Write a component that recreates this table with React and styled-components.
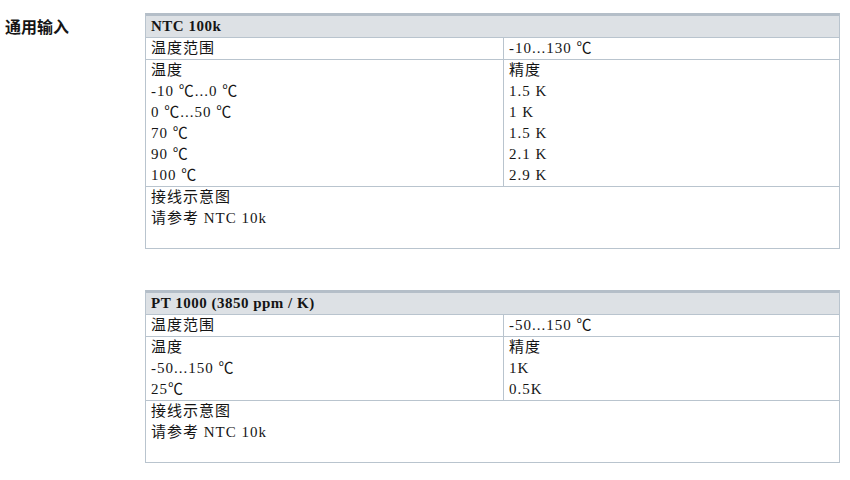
import React from "react";
import styled, { createGlobalStyle } from "styled-components";

const GlobalStyle = createGlobalStyle`
  body {
    margin: 0;
    background: #ffffff;
    color: #151515;
  }
`;

const sensors = [
  {
    name: "NTC 100k",
    range: "-10...130 ℃",
    temps: ["-10 ℃...0 ℃", "0 ℃...50 ℃", "70 ℃", "90 ℃", "100 ℃"],
    accs: ["1.5 K", "1 K", "1.5 K", "2.1 K", "2.9 K"],
  },
  {
    name: "PT 1000 (3850 ppm / K)",
    range: "-50...150 ℃",
    temps: ["-50...150 ℃", "25℃"],
    accs: ["1K", "0.5K"],
  },
];

const App = () => {
  return (
    <Page>
      <GlobalStyle />
      <SideTitle>通用输入</SideTitle>
      <Tables>
        {sensors.map((s) => (
          <Table key={s.name}>
            <Header>{s.name}</Header>
            <Row>
              <Cell>温度范围</Cell>
              <Cell $right>{s.range}</Cell>
            </Row>
            <Row>
              <Cell>
                <Line>温度</Line>
                {s.temps.map((t) => (
                  <Line key={t}>{t}</Line>
                ))}
              </Cell>
              <Cell $right>
                <Line>精度</Line>
                {s.accs.map((a, i) => (
                  <Line key={i}>{a}</Line>
                ))}
              </Cell>
            </Row>
            <WideRow>
              <Line>接线示意图</Line>
              <Line>请参考 NTC 10k</Line>
            </WideRow>
          </Table>
        ))}
      </Tables>
    </Page>
  );
};

export default App;

const Page = styled.div`
  display: flex;
  align-items: flex-start;
  width: 850px;
  padding-top: 13px;
  box-sizing: border-box;
`;

const SideTitle = styled.div`
  width: 145px;
  padding-left: 5px;
  box-sizing: border-box;
  font-family: "Noto Sans CJK SC", sans-serif;
  font-weight: 700;
  font-size: 16px;
  line-height: 25px;
  padding-top: 1px;
`;

const Tables = styled.div`
  display: flex;
  flex-direction: column;
  gap: 41px;
  width: 695px;
`;

const Table = styled.div`
  border: 1px solid #b9c4ce;
  border-top: 3px solid #b4bec8;
  font-family: "Liberation Serif", "Noto Sans CJK SC", serif;
  font-size: 15px;
  letter-spacing: 1px;
  line-height: 21px;
`;

const Header = styled.div`
  background: #dde1e5;
  padding: 0 5px;
  font-weight: 700;
  letter-spacing: 0.5px;
  line-height: 21px;
  border-bottom: 1px solid #b9c4ce;
`;

const Row = styled.div`
  display: grid;
  grid-template-columns: 357px 1fr;
  border-bottom: 1px solid #b9c4ce;
`;

const Cell = styled.div`
  padding: 0 5px;
  border-left: ${({ $right }) => ($right ? "1px solid #b9c4ce" : "none")};
`;

const Line = styled.div`
  white-space: pre;
`;

const WideRow = styled.div`
  padding: 0 5px 19px;
`;
